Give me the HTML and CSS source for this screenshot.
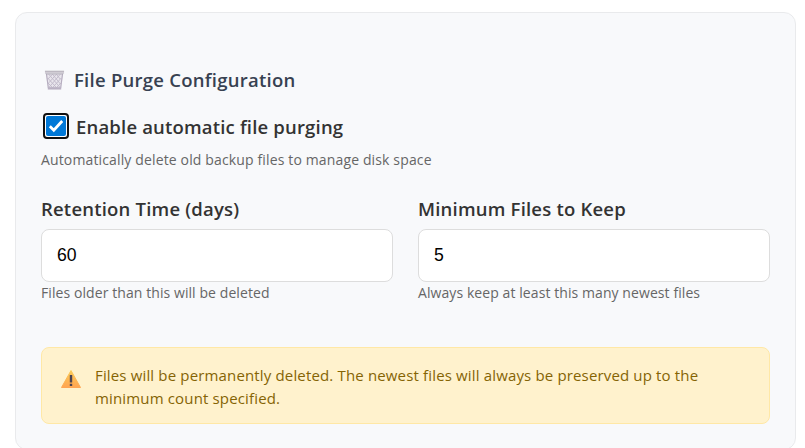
FILE: index.html
```html
<!DOCTYPE html>
<html lang="en">
<head>
<meta charset="utf-8">
<title>File Purge Configuration</title>
<link rel="stylesheet" href="styles.css">
</head>
<body>
<section class="card">
  <h2 class="title">
    <svg class="bin" width="21" height="22" viewBox="0 0 22 22" aria-hidden="true">
      <path d="M2 3h18l-2 17H4z" fill="#e8e5ec"/>
      <path d="M5 5l12 14M9 5l8 10M13 5l4 5M4 9l9 10M4 14l5 5M17 5L5 19M13 5L5 14M9 5L4 10M18 9l-9 10M18 14l-5 5" stroke="#c1bacb" stroke-width="1"/>
      <path d="M2.5 4l2 15M19.5 4l-2 15" stroke="#b5adbf" stroke-width="1.2"/>
      <path d="M1 1.5h20v3H1z" fill="#d0ccd4"/>
      <path d="M1 1.8h20M2 4.8h18" stroke="#aea8b4" stroke-width=".8"/>
      <path d="M4 18.5h14V21H4z" fill="#b9b1c3"/>
    </svg>
    <span>File Purge Configuration</span>
  </h2>
  <label class="toggle">
    <span class="check">
      <svg width="20" height="20" viewBox="0 0 20 20" aria-hidden="true"><path d="M3.8 10.3l4 4L16.2 5" fill="none" stroke="#fff" stroke-width="2.8"/></svg>
    </span>
    <span>Enable automatic file purging</span>
  </label>
  <p class="help intro">Automatically delete old backup files to manage disk space</p>
  <div class="fields">
    <div class="field">
      <label class="label" for="days">Retention Time (days)</label>
      <input id="days" class="input" type="text" value="60">
      <p class="help hint">Files older than this will be deleted</p>
    </div>
    <div class="field">
      <label class="label" for="count">Minimum Files to Keep</label>
      <input id="count" class="input" type="text" value="5">
      <p class="help hint">Always keep at least this many newest files</p>
    </div>
  </div>
  <div class="warning">
    <svg class="alert" width="22" height="20" viewBox="0 0 22 20" aria-hidden="true">
      <defs><linearGradient id="amber" x1="0" y1="0" x2="0" y2="1"><stop offset="0" stop-color="#fccb55"/><stop offset="1" stop-color="#ffa552"/></linearGradient></defs>
      <path d="M11 1.5L20.5 18.5H1.5z" fill="url(#amber)" stroke="url(#amber)" stroke-linejoin="round"/>
      <path d="M9.8 6h2.4v7.5H9.8zM9.8 14.8h2.4v2.2H9.8z" fill="#4b4351"/>
    </svg>
    <p class="message">Files will be permanently deleted. The newest files will always be preserved up to the<br>minimum count specified.</p>
  </div>
</section>
</body>
</html>
```
FILE: styles.css
```css
* { box-sizing: border-box; }
html { overflow: hidden; }
body {
  margin: 0;
  padding: 12px 9px 0 15px;
  background: #fff;
  color: #333;
  font-family: "Open Sans", "Noto Sans", sans-serif;
}
h2, p { margin: 0; }
.card {
  height: 438px;
  padding: 54px 25px 0;
  background: #f8f9fb;
  border: 1px solid #e9eaec;
  border-radius: 12px;
}
.title {
  display: flex;
  align-items: center;
  height: 26px;
  padding-left: 3px;
  color: #374151;
  font-size: 18.5px;
  font-weight: 600;
  letter-spacing: .26px;
  line-height: 26px;
  white-space: nowrap;
}
.bin { margin-right: 9px; }
.toggle {
  display: flex;
  align-items: center;
  height: 26px;
  margin-top: 20px;
  padding-left: 2px;
  font-size: 18.5px;
  font-weight: 600;
  letter-spacing: .18px;
  white-space: nowrap;
}
.check {
  width: 26px;
  height: 26px;
  margin-right: 7px;
  padding: 1px;
  background: #fff;
  border: 2px solid #101010;
  border-radius: 4px;
}
.check svg {
  display: block;
  background: #0078d7;
  border-radius: 2px;
}
.help {
  color: #666;
  font-size: 14px;
  line-height: 20px;
  white-space: nowrap;
}
.intro {
  margin-top: 11px;
  letter-spacing: .14px;
}
.fields {
  display: grid;
  grid-template-columns: 1fr 1fr;
  gap: 25px;
  margin-top: 26px;
}
.label {
  display: block;
  height: 33px;
  font-size: 18.5px;
  font-weight: 600;
  letter-spacing: .2px;
  line-height: 26px;
  white-space: nowrap;
}
.input {
  display: block;
  width: 100%;
  height: 53px;
  padding: 0 15px;
  background: #fff;
  border: 1px solid #ddd;
  border-radius: 8px;
  color: #000;
  font: 17.6px "Liberation Sans", sans-serif;
}
.hint {
  margin-top: 1px;
  letter-spacing: .08px;
}
.warning {
  display: flex;
  height: 77px;
  margin-top: 44px;
  padding: 16px 18px;
  background: #fff2cd;
  border: 1px solid #ffe8a6;
  border-radius: 8px;
  color: #856404;
}
.alert {
  flex: none;
  margin: 5px 13px 0 0;
}
.message {
  font-size: 15px;
  letter-spacing: .155px;
  line-height: 23px;
  white-space: nowrap;
}
```
